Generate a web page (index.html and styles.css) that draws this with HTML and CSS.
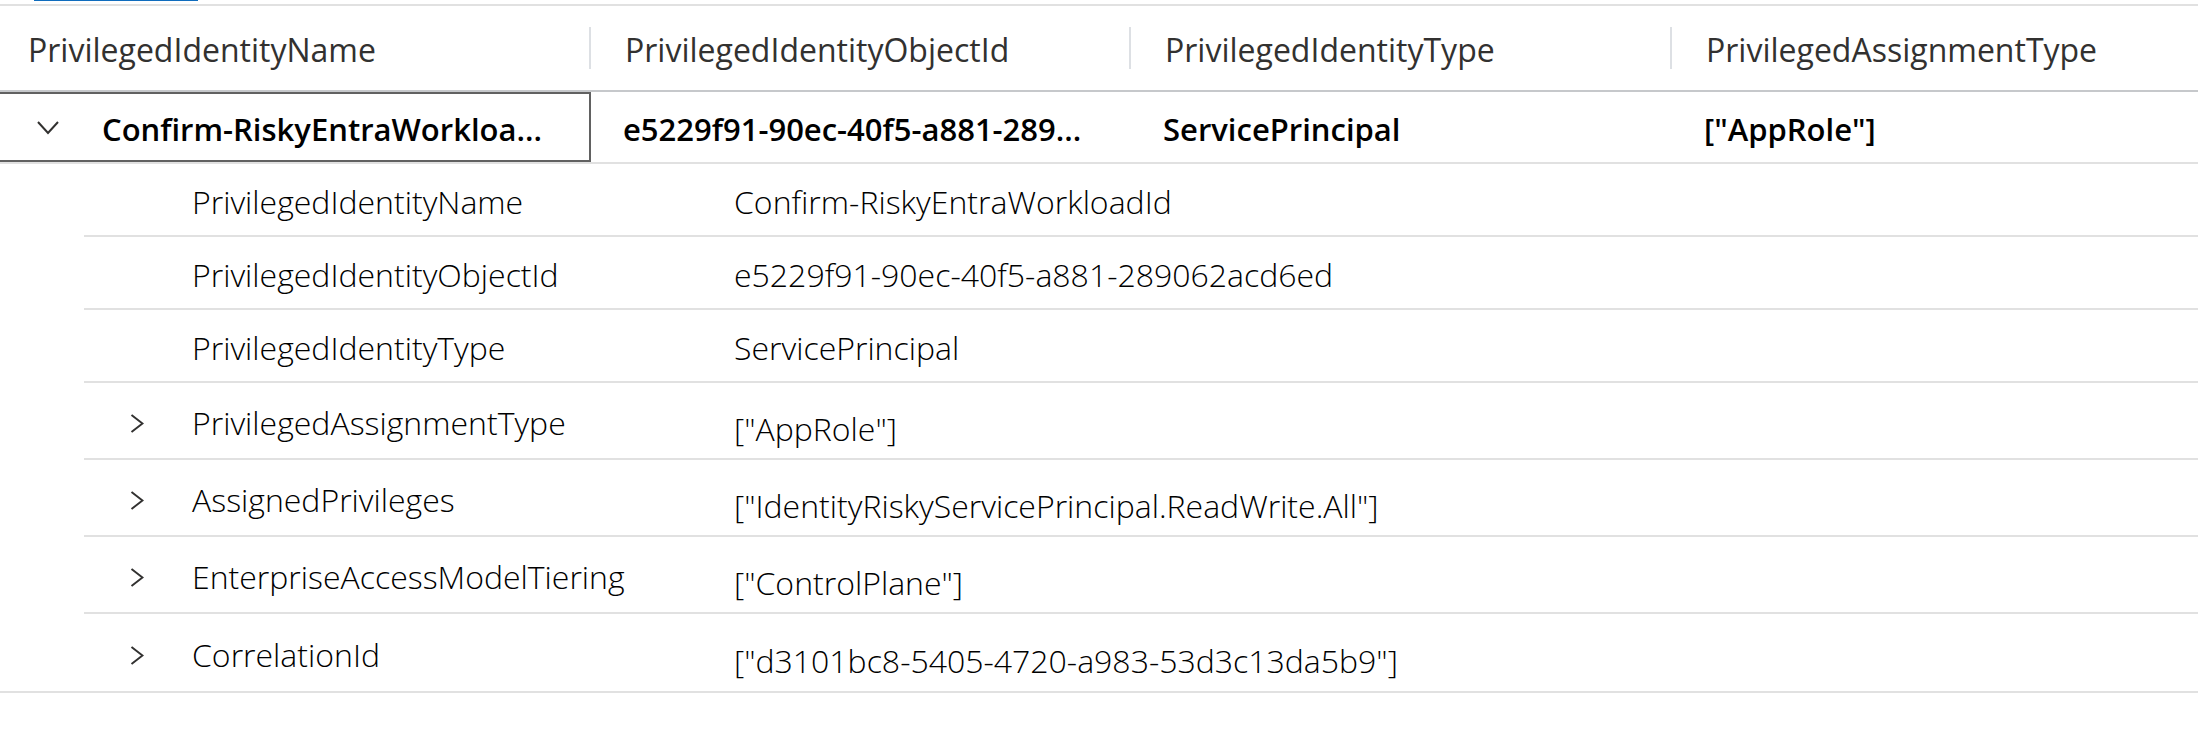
FILE: index.html
```html
<!DOCTYPE html>
<html lang="en">
<head>
<meta charset="utf-8">
<title>Privileged identities</title>
<link rel="stylesheet" href="styles.css">
</head>
<body>
<div class="tabs"><div class="tab-indicator"></div></div>
<div class="grid">
  <div class="head-row">
    <div class="head-cell first"><span class="head-text">PrivilegedIdentityName</span></div>
    <div class="head-cell"><span class="sep"></span><span class="head-text">PrivilegedIdentityObjectId</span></div>
    <div class="head-cell"><span class="sep"></span><span class="head-text">PrivilegedIdentityType</span></div>
    <div class="head-cell"><span class="sep"></span><span class="head-text">PrivilegedAssignmentType</span></div>
  </div>
  <div class="data-row">
    <div class="data-cell first selected">
      <svg class="chev-down" width="22" height="14" viewBox="0 0 22 14"><polyline points="1,1 11,12 21,1" fill="none" stroke="#323130" stroke-width="2"/></svg>
      <span>Confirm-RiskyEntraWorkloa...</span>
    </div>
    <div class="data-cell"><span>e5229f91-90ec-40f5-a881-289...</span></div>
    <div class="data-cell"><span>ServicePrincipal</span></div>
    <div class="data-cell"><span>["AppRole"]</span></div>
  </div>
  <div class="expanded">
    <div class="detail">
      <div class="prop-row">
        <span class="exp"></span><span class="key">PrivilegedIdentityName</span><span class="val">Confirm-RiskyEntraWorkloadId</span>
      </div>
      <div class="prop-row">
        <span class="exp"></span><span class="key">PrivilegedIdentityObjectId</span><span class="val">e5229f91-90ec-40f5-a881-289062acd6ed</span>
      </div>
      <div class="prop-row">
        <span class="exp"></span><span class="key">PrivilegedIdentityType</span><span class="val">ServicePrincipal</span>
      </div>
      <div class="prop-row expandable">
        <span class="exp"><svg width="14" height="19" viewBox="0 0 14 19"><polyline points="1.5,1 12.5,9.5 1.5,18" fill="none" stroke="#323130" stroke-width="2"/></svg></span><span class="key">PrivilegedAssignmentType</span><span class="val">["AppRole"]</span>
      </div>
      <div class="prop-row expandable">
        <span class="exp"><svg width="14" height="19" viewBox="0 0 14 19"><polyline points="1.5,1 12.5,9.5 1.5,18" fill="none" stroke="#323130" stroke-width="2"/></svg></span><span class="key">AssignedPrivileges</span><span class="val">["IdentityRiskyServicePrincipal.ReadWrite.All"]</span>
      </div>
      <div class="prop-row expandable">
        <span class="exp"><svg width="14" height="19" viewBox="0 0 14 19"><polyline points="1.5,1 12.5,9.5 1.5,18" fill="none" stroke="#323130" stroke-width="2"/></svg></span><span class="key">EnterpriseAccessModelTiering</span><span class="val">["ControlPlane"]</span>
      </div>
      <div class="prop-row expandable">
        <span class="exp"><svg width="14" height="19" viewBox="0 0 14 19"><polyline points="1.5,1 12.5,9.5 1.5,18" fill="none" stroke="#323130" stroke-width="2"/></svg></span><span class="key">CorrelationId</span><span class="val">["d3101bc8-5405-4720-a983-53d3c13da5b9"]</span>
      </div>
    </div>
  </div>
</div>
</body>
</html>
```

FILE: styles.css
```css
html, body {
  margin: 0;
  padding: 0;
  background: #ffffff;
}
body {
  font-family: "Open Sans", "Noto Sans", "Liberation Sans", sans-serif;
  font-size: 32px;
  color: #000000;
}
.tabs {
  height: 4px;
}
.tab-indicator {
  margin-left: 34px;
  width: 164px;
  height: 1px;
  background: #0f6cbd;
}
.grid {
  border-top: 2px solid #e1e1e1;
}
.head-row {
  display: grid;
  grid-template-columns: 589px 540px 541px 1fr;
  height: 84px;
  border-bottom: 2px solid #c6c8cb;
}
.head-cell {
  display: flex;
  align-items: center;
  color: #323130;
  white-space: nowrap;
}
.head-cell.first {
  padding-left: 28px;
}
.head-text {
  padding-top: 2px;
}
.sep {
  width: 2px;
  height: 42px;
  background: #dde0e4;
  margin-right: 34px;
  flex: none;
}
.data-row {
  display: grid;
  grid-template-columns: 589px 540px 541px 1fr;
  height: 70px;
  border-bottom: 2px solid #e1e1e1;
}
.data-cell {
  display: flex;
  align-items: center;
  padding-left: 34px;
  font-size: 31px;
  font-weight: 600;
  white-space: nowrap;
  overflow: hidden;
}
.data-cell span {
  padding-top: 4px;
}
.data-cell.first {
  padding-left: 37px;
}
.data-cell.selected {
  border: 2px solid #616161;
  border-left: 0;
  margin-right: -2px;
}
.chev-down {
  flex: none;
  margin-right: 43px;
  margin-top: 2px;
}
.expanded {
  border-bottom: 2px solid #e1e1e1;
}
.detail {
  margin-left: 84px;
}
.prop-row {
  display: grid;
  grid-template-columns: 108px 542px 1fr;
  align-items: center;
  height: 73px;
  box-sizing: border-box;
  border-bottom: 2px solid #e1e1e1;
  font-weight: 300;
  white-space: nowrap;
}
.prop-row:last-child {
  border-bottom: 0;
}
.prop-row.expandable {
  height: 77px;
}
.key, .val {
  padding-top: 4px;
}
.prop-row.expandable .val {
  padding-top: 16px;
}
.exp {
  display: flex;
  padding-left: 46px;
}
.exp svg {
  margin-top: 6px;
}
```
